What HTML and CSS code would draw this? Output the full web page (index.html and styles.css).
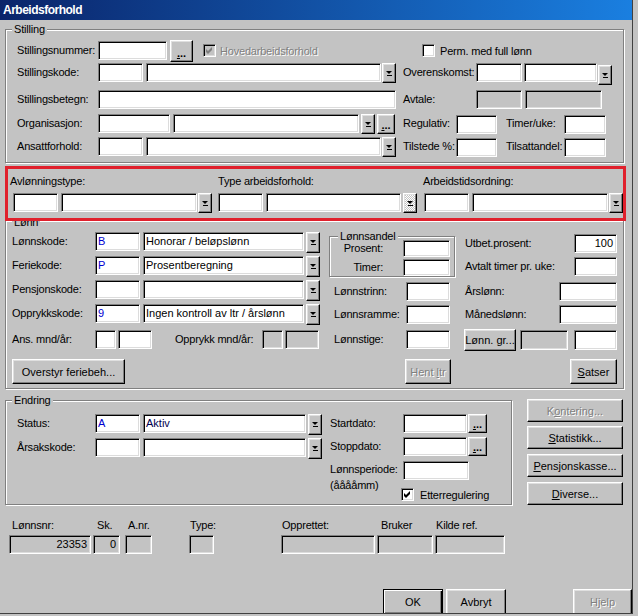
FILE: index.html
```html
<!DOCTYPE html>
<html lang="no">
<head>
<meta charset="utf-8">
<title>Arbeidsforhold</title>
<link rel="stylesheet" href="styles.css">
</head>
<body>
<div class="window">
  <div class="titlebar">Arbeidsforhold</div>
  <div class="client">

    <fieldset class="group stilling">
      <legend>Stilling</legend>
      <div class="row mt4">
        <span class="lbl w81 mt1">Stillingsnummer:</span>
        <span class="fld w69 mt1"></span>
        <span class="btn dots w23 h22 ml3"><span><u>.</u>..</span></span>
        <span class="chkline w219 ml10 mt1"><span class="chk dis"><svg viewBox="0 0 7 7" width="7" height="7"><path d="M0 2L2 4L6 0V3L2 7L0 5Z"/></svg></span><span class="distext ml4">Hovedarbeidsforhold</span></span>
        <span class="chkline mt1"><span class="chk"></span><span class="ml5">Perm. med full lønn</span></span>
      </div>
      <div class="row mt1">
        <span class="lbl w81">Stillingskode:</span>
        <span class="fld w45"></span>
        <span class="fld w235 ml3"></span>
        <span class="btn drop ml1"></span>
        <span class="lbl w73 ml7">Overenskomst:</span>
        <span class="fld w46"></span>
        <span class="fld w73 ml2"></span>
        <span class="btn drop ml1 mt2"></span>
      </div>
      <div class="row mt5">
        <span class="lbl w81">Stillingsbetegn:</span>
        <span class="fld w298"></span>
        <span class="lbl w73 ml7">Avtale:</span>
        <span class="fld dis w46"></span>
        <span class="fld dis w77 ml3"></span>
      </div>
      <div class="row mt5">
        <span class="lbl w81">Organisasjon:</span>
        <span class="fld w72"></span>
        <span class="fld w186 ml3"></span>
        <span class="btn drop ml2"></span>
        <span class="btn dots w18 h20 ml2"><span><u>.</u>..</span></span>
        <span class="lbl w53 ml8">Regulativ:</span>
        <span class="fld w41 mt1"></span>
        <span class="lbl w58 ml9">Timer/uke:</span>
        <span class="fld w42 mt1"></span>
      </div>
      <div class="row mt3">
        <span class="lbl w81">Ansattforhold:</span>
        <span class="fld w45"></span>
        <span class="fld w235 ml3"></span>
        <span class="btn drop ml1"></span>
        <span class="lbl w53 ml7">Tilstede %:</span>
        <span class="fld w41 mt1"></span>
        <span class="lbl w58 ml9">Tilsattandel:</span>
        <span class="fld w42 mt1"></span>
      </div>
    </fieldset>

    <div class="hl">
      <div class="hl-labels">
        <span class="w208">Avlønningstype:</span>
        <span class="w205">Type arbeidsforhold:</span>
        <span>Arbeidstidsordning:</span>
      </div>
      <div class="row mt5 hl-fields">
        <span class="fld w45"></span><span class="fld w136 ml3"></span><span class="btn drop ml1"></span>
        <span class="fld w45 ml6"></span><span class="fld w135 ml3"></span><span class="btn drop focus ml2"></span>
        <span class="fld w45 ml7"></span><span class="fld w136 ml3"></span><span class="btn drop ml1"></span>
      </div>
    </div>

    <fieldset class="group lonn">
      <legend>Lønn</legend>
      <div class="lonn-body">
        <div class="col-l">
          <div class="row mt3">
            <span class="lbl w83">Lønnskode:</span><span class="fld w45 blue">B</span><span class="fld w161 ml3">Honorar / beløpslønn</span><span class="btn drop h21 ml2"></span>
          </div>
          <div class="row mt3">
            <span class="lbl w83">Feriekode:</span><span class="fld w45 blue">P</span><span class="fld w161 ml3">Prosentberegning</span><span class="btn drop h21 ml2"></span>
          </div>
          <div class="row mt3">
            <span class="lbl w83">Pensjonskode:</span><span class="fld w45"></span><span class="fld w161 ml3"></span><span class="btn drop h21 ml2"></span>
          </div>
          <div class="row mt3">
            <span class="lbl w83">Opprykkskode:</span><span class="fld w45 blue">9</span><span class="fld w161 ml3">Ingen kontroll av ltr / årslønn</span><span class="btn drop h21 ml2"></span>
          </div>
          <div class="row mt5">
            <span class="lbl w83">Ans. mnd/år:</span><span class="fld w21"></span><span class="fld w34 ml2"></span>
            <span class="lbl w87 ml23">Opprykk mnd/år:</span><span class="fld dis w21"></span><span class="fld dis w34 ml2"></span>
          </div>
          <div class="row mt10"><span class="btn w113 h25"><span>Overstyr feriebeh...</span></span></div>
        </div>
        <div class="col-m">
          <fieldset class="group andel">
            <legend>Lønnsandel</legend>
            <div class="row"><span class="lbl lr h17 w53">Prosent:</span><span class="fld h17 w47 ml20"></span></div>
            <div class="row mt2"><span class="lbl lr h17 w53">Timer:</span><span class="fld h17 w47 ml20"></span></div>
          </fieldset>
          <div class="row mt5 pl5"><span class="lbl w72">Lønnstrinn:</span><span class="fld w44"></span></div>
          <div class="row mt4 pl5"><span class="lbl w72">Lønnsramme:</span><span class="fld w44"></span></div>
          <div class="row mt6 pl5"><span class="lbl w72">Lønnstige:</span><span class="fld w44"></span></div>
          <div class="row mt10"><span class="btn dis w46 h25 ml76"><span>Hent <u>l</u>tr</span></span></div>
        </div>
        <div class="col-r">
          <div class="row mt5"><span class="lbl grow pl1">Utbet.prosent:</span><span class="fld w43 r">100</span></div>
          <div class="row mt4"><span class="lbl grow pl1">Avtalt timer pr. uke:</span><span class="fld w43"></span></div>
          <div class="row mt6"><span class="lbl grow pl1">Årslønn:</span><span class="fld w58"></span></div>
          <div class="row mt4"><span class="lbl grow pl1">Månedslønn:</span><span class="fld w58"></span></div>
          <div class="row mt5"><span class="btn w52 h22"><span>Lønn. gr...</span></span><span class="fld dis w48 h20 ml4 mt1"></span><span class="fld w43 h20 ml6 mt1"></span></div>
          <div class="row mt8"><span class="btn w47 h25 mlauto"><span><u>S</u>atser</span></span></div>
        </div>
      </div>
    </fieldset>

    <div class="endring-row">
      <fieldset class="group endring">
        <legend>Endring</legend>
        <div class="end-body">
          <div class="ecol-l">
            <div class="row mt7"><span class="lbl w78">Status:</span><span class="fld w45 blue">A</span><span class="fld w163 ml3 navy">Aktiv</span><span class="btn drop h21 ml2"></span></div>
            <div class="row mt3"><span class="lbl w78">Årsakskode:</span><span class="fld w45"></span><span class="fld w163 ml3"></span><span class="btn drop h21 ml2"></span></div>
          </div>
          <div class="ecol-m">
            <div class="row mt7"><span class="lbl w73">Startdato:</span><span class="fld w64"></span><span class="btn dots w19 h19 ml1"><span><u>.</u>..</span></span></div>
            <div class="row mt4"><span class="lbl w73">Stoppdato:</span><span class="fld w64"></span><span class="btn dots w19 h19 ml1"><span><u>.</u>..</span></span></div>
            <div class="row mt5">
              <span class="lbl2 w73">Lønnsperiode:<br>(ååååmm)</span>
              <div class="pcol">
                <span class="fld w66"></span>
                <span class="chkline mt8 mln2"><span class="chk"><svg viewBox="0 0 7 7" width="7" height="7"><path d="M0 2L2 4L6 0V3L2 7L0 5Z"/></svg></span><span class="ml6">Etterregulering</span></span>
              </div>
            </div>
          </div>
        </div>
      </fieldset>
      <div class="sidebtns">
        <span class="btn dis h23 mt5"><span>K<u>o</u>ntering...</span></span>
        <span class="btn h23 mt4"><span><u>S</u>tatistikk...</span></span>
        <span class="btn h23 mt5"><span><u>P</u>ensjonskasse...</span></span>
        <span class="btn h23 mt5"><span><u>D</u>iverse...</span></span>
      </div>
    </div>

    <div class="info">
      <div class="icol ml4 w82"><span class="ilbl pl3">Lønnsnr:</span><span class="fld dis r">23353</span></div>
      <div class="icol ml2 w27"><span class="ilbl pl4">Sk.</span><span class="fld dis r">0</span></div>
      <div class="icol ml5 w27"><span class="ilbl pl3">A.nr.</span><span class="fld dis"></span></div>
      <div class="icol ml37 w25"><span class="ilbl pl1">Type:</span><span class="fld dis"></span></div>
      <div class="icol ml67 w94"><span class="ilbl pl1">Opprettet:</span><span class="fld dis"></span></div>
      <div class="icol ml2 w56"><span class="ilbl pl4">Bruker</span><span class="fld dis"></span></div>
      <div class="icol ml2 w70"><span class="ilbl pl1">Kilde ref.</span><span class="fld dis"></span></div>
    </div>

    <div class="actions">
      <span class="btn def w60 h26 ml378"><span>OK</span></span>
      <span class="btn w60 h26 ml3"><span>Avbryt</span></span>
      <span class="btn dis w59 h26 ml67"><span>Hjelp</span></span>
    </div>
  </div>
</div>
</body>
</html>
```

FILE: styles.css
```css
* { box-sizing: border-box; }
html, body { margin: 0; }
body {
  background: #c3c3c3;
  font: 11px "Liberation Sans", Arial, sans-serif;
  color: #000;
  letter-spacing: -0.2px;
}
.window {
  width: 633px;
  height: 614px;
  background: #c3c3c3;
  border-right: 1px solid #404040;
  border-bottom: 1px solid #404040;
  overflow: hidden;
}
.titlebar {
  height: 20px;
  background: linear-gradient(to right, #0a246a, #1a7fe0);
  color: #fff;
  font-weight: bold;
  font-size: 12px;
  line-height: 21px;
  padding-left: 3px;
  letter-spacing: -0.5px;
}
.client { padding-left: 5px; }

/* group boxes */
fieldset.group {
  margin: 0;
  padding: 0;
  min-inline-size: 0;
  border: 1px solid #808080;
  box-shadow: inset 1px 1px 0 #fff, 1px 1px 0 #fff;
}
fieldset.group > legend {
  margin-left: 6px;
  padding: 0 2px;
  line-height: 13px;
  background: #c3c3c3;
}
fieldset.group.stilling { width: 619px; margin-top: 3px; padding-bottom: 5px; }
.stilling > .row { padding-left: 11px; }
fieldset.group.lonn { width: 619px; margin-top: -9px; padding-bottom: 4px; }
fieldset.group.lonn > legend { padding-top: 4px; }
fieldset.group.andel { width: 126px; margin-top: 3px; }
fieldset.group.andel > legend { margin-left: 8px; line-height: 8px; }
fieldset.group.endring { width: 507px; padding-bottom: 2px; }

/* highlight box */
.hl {
  position: relative;
  z-index: 1;
  width: 621px;
  margin-top: 3px;
  border: 3px solid #e0202c;
  background: #c3c3c3;
  padding: 6px 0 5px;
}
.hl-labels { display: flex; padding-left: 2px; line-height: 13px; }
.hl-fields { padding-left: 5px; }

/* rows */
.row { display: flex; align-items: flex-start; }
.lbl { flex: none; white-space: nowrap; line-height: 19px; }
.lbl.h17 { line-height: 17px; }
.lbl.lr { text-align: right; }
.lbl2 { flex: none; line-height: 16px; white-space: nowrap; }
.grow { flex: 1; }

.lonn-body { display: flex; }
.col-l { width: 323px; padding-left: 6px; }
.col-m { width: 126px; }
.col-r { width: 153px; margin-left: 9px; }

.endring-row { display: flex; margin-top: 5px; }
.end-body { display: flex; }
.ecol-l { width: 324px; padding-left: 11px; }
.pcol { display: flex; flex-direction: column; align-items: flex-start; }
.sidebtns { display: flex; flex-direction: column; width: 96px; margin-left: 15px; }

.info { display: flex; margin-top: 14px; }
.icol { display: flex; flex-direction: column; flex: none; }
.ilbl { line-height: 13px; white-space: nowrap; }
.icol .fld { width: 100%; margin-top: 3px; }

.actions { display: flex; margin-top: 35px; }

/* controls */
.fld {
  flex: none;
  display: block;
  height: 19px;
  background: #fff;
  border: 1px solid;
  border-color: #808080 #fff #fff #808080;
  box-shadow: inset 1px 1px 0 #000, inset -1px -1px 0 #dcdcdc;
  padding: 0 3px 0 2px;
  line-height: 17px;
  white-space: nowrap;
  overflow: hidden;
  letter-spacing: 0;
}
.fld.dis { background: #c3c3c3; }
.fld.r { text-align: right; }
.fld.h17 { height: 17px; line-height: 15px; }
.fld.h20 { height: 20px; line-height: 18px; }
.blue { color: #0000d0; }
.navy { color: #000050; }

.btn {
  flex: none;
  display: flex;
  align-items: center;
  justify-content: center;
  background: #c3c3c3;
  border: 1px solid;
  border-color: #fff #000 #000 #fff;
  box-shadow: inset -1px -1px 0 #808080, inset 1px 1px 0 #dfdfdf;
  white-space: nowrap;
  letter-spacing: 0;
}
.btn.dis { color: #808080; text-shadow: 1px 1px 0 #fff; }
.btn.def {
  border-color: #000;
  box-shadow: inset 1px 1px 0 #fff, inset -1px -1px 0 #000, inset -2px -2px 0 #808080;
}
.btn.dots { font-weight: bold; align-items: flex-end; padding-bottom: 3px; line-height: 10px; }
.drop {
  width: 14px;
  height: 20px;
  flex-direction: column;
  gap: 1px;
}
.drop::before {
  content: "";
  width: 0;
  height: 0;
  border-left: 3px solid transparent;
  border-right: 3px solid transparent;
  border-top: 3px solid #000;
}
.drop::after {
  content: "";
  width: 5px;
  height: 1px;
  background: #000;
}
.drop.focus {
  background: repeating-conic-gradient(#fff 0 25%, #c3c3c3 0 50%) 0 0 / 2px 2px;
}

.chkline { display: flex; align-items: center; height: 19px; flex: none; white-space: nowrap; }
.chk {
  flex: none;
  width: 13px;
  height: 13px;
  background: #fff;
  border: 1px solid;
  border-color: #808080 #fff #fff #808080;
  box-shadow: inset 1px 1px 0 #000, inset -1px -1px 0 #dcdcdc;
  display: flex;
  align-items: center;
  justify-content: center;
}
.chk svg { fill: #000; display: block; }
.chk.dis { background: #c3c3c3; }
.chk.dis svg { fill: #808080; }
.distext { color: #808080; text-shadow: 1px 1px 0 #fff; }
.chkline.mt8 { height: 13px; }

/* sizes */
.h17 { height: 17px; } .h19 { height: 19px; } .h20 { height: 20px; } .h21 { height: 21px; }
.h22 { height: 22px; } .h23 { height: 23px; } .h25 { height: 25px; } .h26 { height: 26px; }
.w14 { width: 14px; } .w18 { width: 18px; } .w19 { width: 19px; } .w21 { width: 21px; }
.w23 { width: 23px; } .w25 { width: 25px; } .w27 { width: 27px; } .w34 { width: 34px; }
.w41 { width: 41px; } .w42 { width: 42px; } .w43 { width: 43px; } .w44 { width: 44px; }
.w45 { width: 45px; } .w46 { width: 46px; } .w47 { width: 47px; } .w48 { width: 48px; }
.w52 { width: 52px; } .w53 { width: 53px; } .w56 { width: 56px; } .w58 { width: 58px; }
.w59 { width: 59px; } .w60 { width: 60px; } .w64 { width: 64px; } .w66 { width: 66px; }
.w69 { width: 69px; } .w70 { width: 70px; } .w72 { width: 72px; } .w73 { width: 73px; }
.w77 { width: 77px; } .w78 { width: 78px; } .w81 { width: 81px; } .w82 { width: 82px; }
.w83 { width: 83px; } .w87 { width: 87px; } .w94 { width: 94px; } .w113 { width: 113px; }
.w135 { width: 135px; } .w136 { width: 136px; } .w161 { width: 161px; } .w163 { width: 163px; }
.w186 { width: 186px; } .w205 { width: 205px; } .w208 { width: 208px; } .w219 { width: 219px; }
.w235 { width: 235px; } .w298 { width: 298px; }

.mt1 { margin-top: 1px; } .mt2 { margin-top: 2px; } .mt3 { margin-top: 3px; } .mt4 { margin-top: 4px; }
.mt5 { margin-top: 5px; } .mt6 { margin-top: 6px; } .mt7 { margin-top: 7px; } .mt8 { margin-top: 8px; }
.mt10 { margin-top: 10px; }
.ml1 { margin-left: 1px; } .ml2 { margin-left: 2px; } .ml3 { margin-left: 3px; } .ml4 { margin-left: 4px; }
.ml5 { margin-left: 5px; } .ml6 { margin-left: 6px; } .ml7 { margin-left: 7px; } .ml8 { margin-left: 8px; }
.ml9 { margin-left: 9px; } .ml10 { margin-left: 10px; } .ml20 { margin-left: 20px; } .ml23 { margin-left: 23px; }
.ml37 { margin-left: 37px; } .ml67 { margin-left: 67px; } .ml76 { margin-left: 76px; } .ml378 { margin-left: 378px; }
.mln2 { margin-left: -2px; }
.mlauto { margin-left: auto; }
.pl1 { padding-left: 1px; } .pl3 { padding-left: 3px; } .pl4 { padding-left: 4px; } .pl5 { padding-left: 5px; }
```
